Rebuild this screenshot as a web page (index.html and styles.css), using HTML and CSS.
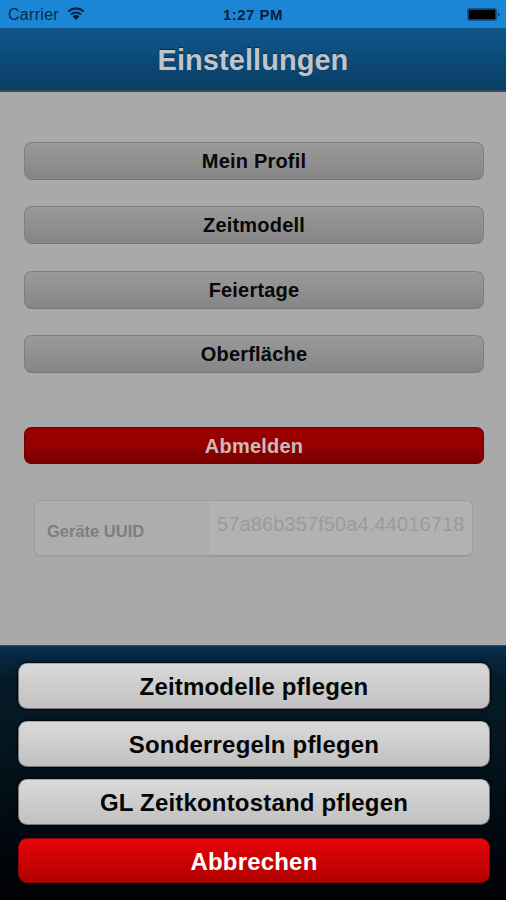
FILE: index.html
```html
<!DOCTYPE html>
<html lang="de">
<head>
<meta charset="utf-8">
<title>Einstellungen</title>
<link rel="stylesheet" href="styles.css">
</head>
<body>
<div class="screen">
  <div class="status-bar">
    <div class="carrier"><span>Carrier</span>
      <svg class="wifi" width="18" height="13" viewBox="0 0 18 13" fill="none" stroke="#042440" stroke-width="2">
        <path d="M1.2 4.6Q9 -1.8 16.8 4.6"/>
        <path d="M4 7.6Q9 3.4 14 7.6"/>
        <path d="M9 13L5.6 9.4Q9 6.8 12.4 9.4Z" fill="#021a30" stroke="none"/>
      </svg>
    </div>
    <div class="time">1:27 PM</div>
    <svg class="battery" width="34" height="13" viewBox="0 0 34 13">
      <rect x="0.5" y="0.5" width="29" height="12" rx="1.5" fill="none" stroke="#0a5b98"/>
      <rect x="1.5" y="1.5" width="27" height="10" fill="#000"/>
      <path d="M31 4.5Q34 6.5 31 8.5Z" fill="#063b68"/>
    </svg>
  </div>
  <header class="title-bar"><h1>Einstellungen</h1></header>
  <main class="settings">
    <nav class="menu">
      <button class="btn">Mein Profil</button>
      <button class="btn">Zeitmodell</button>
      <button class="btn">Feiertage</button>
      <button class="btn">Oberfläche</button>
    </nav>
    <button class="btn logout">Abmelden</button>
    <div class="field">
      <div class="label">Geräte UUID</div>
      <div class="value">57a86b357f50a4.44016718</div>
    </div>
  </main>
  <section class="sheet">
    <button class="action">Zeitmodelle pflegen</button>
    <button class="action">Sonderregeln pflegen</button>
    <button class="action">GL Zeitkontostand pflegen</button>
    <button class="action cancel">Abbrechen</button>
  </section>
</div>
</body>
</html>
```
FILE: styles.css
```css
* { box-sizing: border-box; }
body {
  margin: 0;
  font-family: "Liberation Sans", Arial, sans-serif;
  background: #a9a9a9;
}
button { font-family: inherit; margin: 0; padding: 0; display: block; width: 100%; }
.screen {
  width: 506px;
  height: 900px;
  display: flex;
  flex-direction: column;
  overflow: hidden;
}
.status-bar {
  height: 28px;
  flex: none;
  display: grid;
  grid-template-columns: 1fr auto 1fr;
  align-items: center;
  padding: 1px 5px 0 8px;
  background: #1a86d5;
  color: #062c4b;
  font-size: 16px;
}
.carrier { display: flex; align-items: center; gap: 8px; letter-spacing: 0.3px; }
.wifi { margin-top: -2px; }
.time { font-weight: bold; font-size: 15px; letter-spacing: 0.5px; padding-right: 3px; color: #05223c; }
.battery { justify-self: end; }
.title-bar {
  height: 64px;
  flex: none;
  background: linear-gradient(#10568a, #0d4f7e 35%, #093d64);
  border-bottom: 2px solid #394b58;
  display: flex;
  align-items: center;
  justify-content: center;
}
h1 {
  margin: 2px 0 0;
  font-size: 29px;
  line-height: 34px;
  letter-spacing: 0.05px;
  color: #c1c3ca;
  text-shadow: 0 -1px 1px #082c4c;
}
.settings {
  flex: 1;
  padding: 50px 22px 0 24px;
  background: #a9a9a9;
}
.menu { display: grid; gap: 26.4px; margin-bottom: 54px; }
.btn {
  height: 38px;
  border: 1px solid #7f7f7f;
  border-bottom-color: #777;
  border-radius: 8px;
  background: linear-gradient(#9a9a9a, #858585);
  font-size: 20px;
  font-weight: bold;
  letter-spacing: 0.2px;
  color: #080808;
  padding-top: 1px;
}
.logout {
  height: 37px;
  padding-top: 2px;
  border-radius: 7px;
  background: linear-gradient(#9b0000, #960000 45%, #780000);
  border-color: #650505;
  color: #c9bcbc;
}
.field {
  width: 439px;
  height: 56px;
  margin: 36px 0 0 10px;
  border: 1px solid #9d9d9d;
  border-bottom-color: #979797;
  border-radius: 6px;
  background: #b2b2b2;
  display: flex;
  overflow: hidden;
  box-shadow: 0 1px 1px #9f9f9f;
}
.label {
  flex: none;
  width: 174px;
  background: #adadad;
  padding: 4px 0 0 12px;
  line-height: 52px;
  font-size: 16.5px;
  font-weight: bold;
  color: #7e7e7e;
}
.value {
  padding-left: 8px;
  line-height: 47px;
  font-size: 20px;
  letter-spacing: 0.12px;
  color: #9b9b9b;
  white-space: nowrap;
}
.sheet {
  height: 255px;
  flex: none;
  padding: 18px 16px 0 18px;
  background: linear-gradient(#07365b, #052844 8px, #061b2a 34px, #041720 90px, #01080f 190px, #000104);
  box-shadow: inset 0 1px #274c65;
  display: flex;
  flex-direction: column;
  gap: 12px;
}
.action {
  height: 46px;
  border: 1px solid #777;
  border-top-color: #aaa;
  border-radius: 9px;
  background: linear-gradient(#d9d9d9, #c1c1c1);
  box-shadow: 0 0 2px 1px #00050a;
  font-size: 24px;
  font-weight: bold;
  letter-spacing: 0.18px;
  color: #050505;
  padding-top: 2px;
}
.cancel {
  margin-top: 1px;
  height: 45px;
  border-color: #8d0508;
  background: linear-gradient(#e70509, #b00000);
  color: #fff;
}
```
